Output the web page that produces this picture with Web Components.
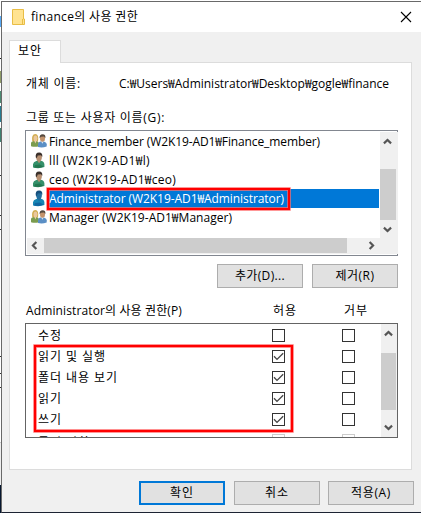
<!DOCTYPE html>
<html lang="ko">
<head>
<meta charset="utf-8">
<title>finance의 사용 권한</title>
<style>
  html, body {
    margin: 0;
    width: 421px;
    height: 513px;
    overflow: hidden;
    font: 12px/16px "Open Sans", "Noto Sans CJK KR", sans-serif;
    color: #000;
  }
</style>
</head>
<body>
<permission-dialog></permission-dialog>

<script>
// Single line label; "fit" is the width in px that the text should take.
class TextLabel extends HTMLElement {
  constructor() {
    super();
    this.attachShadow({ mode: "open" }).innerHTML = `
      <style>
        :host { display: block; white-space: nowrap; width: max-content; height: 16px; line-height: 16px; }
        span { display: block; width: max-content; height: 16px; }
      </style>
      <span><slot></slot></span>
    `;
  }

  connectedCallback() {
    const fit = Number(this.getAttribute("fit"));
    if (!fit) return;
    const span = this.shadowRoot.querySelector("span");
    const width = span.getBoundingClientRect().width;
    span.style.letterSpacing = `${(fit - width) / this.textContent.length}px`;
  }
}

class PushButton extends HTMLElement {
  constructor() {
    super();
    this.attachShadow({ mode: "open" }).innerHTML = `
      <style>
        :host {
          display: flex;
          align-items: center;
          justify-content: center;
          box-sizing: border-box;
          width: 86px;
          height: 24px;
          border: 1px solid #adadad;
          background: #e1e1e1;
        }
        :host([primary]) { border: 2px solid #0078d7; }
      </style>
      <slot></slot>
    `;
  }
}

class CheckBox extends HTMLElement {
  constructor() {
    super();
    this.attachShadow({ mode: "open" }).innerHTML = `
      <style>
        :host {
          display: block;
          box-sizing: border-box;
          width: 13px;
          height: 13px;
          border: 1px solid #333;
          background: #fff;
        }
        :host([disabled]) { border-color: #ccc; }
        svg { display: none; }
        :host([checked]) svg { display: block; }
      </style>
      <svg width="11" height="11" viewBox="0 0 11 11">
        <path d="M1 5.3 4 8.4 10.2 2.2" fill="none" stroke="#444" stroke-width="1.3"/>
      </svg>
    `;
  }
}

class ScrollBar extends HTMLElement {
  constructor() {
    super();
    this.attachShadow({ mode: "open" });
  }

  connectedCallback() {
    const horizontal = this.hasAttribute("horizontal");
    const arrows = horizontal
      ? ["M10 4.2 6.3 8 10 11.8", "M6 4.2 9.7 8 6 11.8"]
      : ["M4.2 10 8 6.3 11.8 10", "M4.2 6 8 9.7 11.8 6"];
    const arrow = (d) => `<svg width="15" height="15" viewBox="0 0 16 16"><path d="${d}" fill="none" stroke="#555" stroke-width="2.3"/></svg>`;
    this.shadowRoot.innerHTML = `
      <style>
        :host { display: flex; box-sizing: border-box; flex-direction: ${horizontal ? "row" : "column"}; background: #f0f0f0; }
        svg { flex: none; display: block; }
        .before { flex: 0 0 ${this.getAttribute("before")}px; }
        .thumb { flex: 0 0 ${this.getAttribute("thumb")}px; background: #cdcdcd; }
        .after { flex: 1; }
      </style>
      ${arrow(arrows[0])}
      <div class="before"></div>
      <div class="thumb"></div>
      <div class="after"></div>
      ${arrow(arrows[1])}
    `;
  }
}

class AccountIcon extends HTMLElement {
  constructor() {
    super();
    this.attachShadow({ mode: "open" });
  }

  connectedCallback() {
    const kind = this.getAttribute("kind");
    const user = (hair, face, body, dark) => `
      <path d="M2 15.5V12.2Q2.3 9.8 5.3 9L7 8.2 9.3 8.5Q13 9.2 13.4 12.2V15Q8 17 2 15.5Z" fill="${body}"/>
      <path d="M6 8.3 8 11.3 10 8.5 9.7 7H6Z" fill="${face}"/>
      <path d="M4 13 9 12.4 12.5 14.8 8 16 3 15.6Z" fill="${dark}"/>
      <ellipse cx="8" cy="4.9" rx="2.9" ry="3.9" fill="${face}"/>
      <path d="M4.8 5.6Q4 .5 8.1.4 12 .4 11.2 5L10 3.2 6.7 3.4 5.8 6Z" fill="${hair}"/>`;
    const group = `
      <path d="M0 13.3V10Q.5 7.9 4 7.7 7.7 7.7 8 11V13.2Q4 14.4 0 13.3Z" fill="#7b9c4e"/>
      <path d="M1.2 8.3Q.2 1 4.3.9 8.2 1 7 8.2Z" fill="#d1ad51"/>
      <path d="M3 7 4.3 10.5 6 7Z" fill="#edcfaa"/>
      <ellipse cx="4.5" cy="5.3" rx="1.9" ry="2.8" fill="#eac79e"/>
      <path d="M7 14V10.8Q7.5 8.6 11 8.3 15.3 8.6 15.7 11.3V13.5Q11 15.2 7 14Z" fill="#5b8fc5"/>
      <path d="M10 8 11.3 10.8 13 8Z" fill="#d7e7f3"/>
      <ellipse cx="11.5" cy="5.4" rx="2.5" ry="3.3" fill="#c3936c"/>
      <path d="M8.6 5.2Q8.3 1.4 11.6 1.3 15 1.5 14.3 5.2L13 3.6 10 3.8Z" fill="#54483e"/>`;
    let drawing = group;
    if (kind === "user") drawing = user("#3a302b", "#b68f71", "#34906a", "#247750");
    if (kind === "selected") drawing = user("#174f7c", "#246e9e", "#1686b5", "#1065a0");
    this.shadowRoot.innerHTML = `
      <style>:host { display: block; width: 16px; height: 17px; } svg { display: block; }</style>
      <svg width="16" height="17" viewBox="0 0 16 17">${drawing}</svg>
    `;
  }
}

class AccountRow extends HTMLElement {
  constructor() {
    super();
    this.attachShadow({ mode: "open" });
  }

  connectedCallback() {
    const kind = this.getAttribute("kind");
    this.shadowRoot.innerHTML = `
      <style>
        :host { display: grid; grid-template-columns: 16px 1fr; height: 19px; align-items: center; padding-left: 5px; }
        .name { height: 19px; box-sizing: border-box; padding: 2px 0 0 2px; }
        :host([kind="selected"]) .name { background: #0078d7; color: #fff; }
      </style>
      <account-icon kind="${kind}"></account-icon>
      <div class="name"><slot></slot></div>
    `;
  }
}

class PermissionRow extends HTMLElement {
  constructor() {
    super();
    this.attachShadow({ mode: "open" });
  }

  connectedCallback() {
    const allow = this.hasAttribute("allow") ? "checked" : "";
    const disabled = this.hasAttribute("disabled") ? "disabled" : "";
    this.shadowRoot.innerHTML = `
      <style>
        :host { display: grid; grid-template-columns: 234px 70px 1fr; height: 21px; align-items: center; padding-left: 13px; }
        :host([disabled]) ::slotted(*) { margin-top: 4px; }
      </style>
      <slot></slot>
      <check-box ${allow} ${disabled}></check-box>
      <check-box ${disabled}></check-box>
    `;
  }
}

// Red frame drawn over the lists
class MarkFrame extends HTMLElement {
  constructor() {
    super();
    this.attachShadow({ mode: "open" }).innerHTML = `
      <style>
        :host {
          position: absolute;
          box-sizing: border-box;
          border: 2px solid #f00;
          box-shadow: 0 0 0 .7px #ff6b6b, inset 0 0 0 .7px #ff6b6b;
        }
      </style>
    `;
  }
}

class PermissionDialog extends HTMLElement {
  constructor() {
    super();
    this.attachShadow({ mode: "open" });
  }

  connectedCallback() {
    this.shadowRoot.innerHTML = `
      <style>
        * { box-sizing: border-box; }
        :host {
          display: grid;
          grid-template-columns: 1px 1fr;
          width: 421px;
          height: 513px;
          position: relative;
        }
        /* strip of the window behind */
        .behind {
          background: linear-gradient(#fff 0 16px, #58aaf5 16px 27px, #fff 27px 58px, #222 58px 59px,
            #fff 59px 71px, #8f9b67 71px 83px, #fff 83px 91px, #4c8a72 91px 103px, #fff 103px 106px,
            #277c91 106px 122px, #fff 122px 128px, #3f8170 128px 142px, #fff 142px 175px, #333 175px 176px,
            #fff 176px 215px, #333 215px 216px, #fff 216px 229px, #333 229px 230px, #fff 230px 356px,
            #333 356px 357px, #fff 357px 373px, #333 373px 374px, #fff 374px 387px, #333 387px 388px,
            #fff 388px 442px, #ccc 442px 443px, #eee 443px 485px, #06172f 485px);
        }
        .window {
          margin-top: 1px;
          height: 512px;
          border: solid #696969;
          border-width: 1px 0 1px 1px;
          border-bottom-color: #1c2333;
          background: #f0f0f0;
          display: flex;
          flex-direction: column;
        }
        .title {
          flex: 0 0 30px;
          display: flex;
          align-items: center;
          background: #fff;
          padding: 0 9px 0 10px;
        }
        .title svg { display: block; }
        .title text-label { margin: 0 auto 0 6px; }
        .tab {
          width: 52px;
          height: 23px;
          margin: 8px 0 -1px 7px;
          padding: 2px 0 0 8px;
          border: 1px solid #dcdcdc;
          border-bottom: 0;
          background: #fff;
          z-index: 1;
        }
        .page {
          flex: 0 0 408px;
          width: 403px;
          margin-left: 7px;
          padding: 13px 13px 0 15px;
          border: 1px solid #dcdcdc;
          background: #fff;
        }
        .object { display: grid; grid-template-columns: 93px 1fr; padding-left: 1px; }
        .groups { margin: 18px 0 4px 1px; }
        .accounts {
          width: 373px;
          height: 126px;
          border: 1px solid #828790;
          padding: 1px;
          display: grid;
          grid-template: 106px 16px / 353px 18px;
        }
        .rows { overflow: hidden; margin-left: -1px; }
        .accounts .rows { margin-right: 1px; }
        .accounts scroll-bar { padding: 2px 2px 1px 0; }
        .accounts scroll-bar[horizontal] { grid-column: 1 / 3; height: 16px; padding: 0 19px 1px 0; }
        .edit { display: flex; justify-content: flex-end; gap: 9px; margin-top: 8px; }
        .heads { display: grid; grid-template-columns: 247px 71px 1fr; margin: 15px 0 4px 1px; }
        .permissions {
          width: 373px;
          height: 115px;
          border: 1px solid #646464;
          display: grid;
          grid-template-columns: 355px 16px;
        }
        .permissions .rows { height: 113px; margin-left: -1px; padding-top: 1px; }
        .permissions scroll-bar { height: 113px; padding: 2px 1px 2px 0; }
        .actions { display: flex; gap: 9px; margin: 11px 0 0 137px; }
        .actions push-button:last-child { margin-left: -1px; }
        .mark-user { left: 47px; top: 188px; width: 243px; height: 22px; }
        .mark-rights { left: 34px; top: 345px; width: 259px; height: 87px; }
      </style>

      <div class="behind"></div>
      <div class="window">
        <div class="title">
          <svg width="13" height="16" viewBox="0 0 13 16">
            <path d="M.5.5H11.5V10H12.5V15.5H.5Z" fill="#ffe391" stroke="#e8bd45"/>
            <path d="M10.5 10V15" stroke="#e8bd45"/>
          </svg>
          <text-label fit="107">finance의 사용 권한</text-label>
          <svg width="12" height="12" viewBox="0 0 12 12">
            <path d="M1 1 11 11M11 1 1 11" stroke="#000" stroke-width="1.1"/>
          </svg>
        </div>

        <div class="tab"><text-label fit="24">보안</text-label></div>
        <div class="page">
          <div class="object">
            <text-label fit="55">개체 이름:</text-label>
            <text-label fit="270">C:₩Users₩Administrator₩Desktop₩gogle₩finance</text-label>
          </div>
          <text-label class="groups" fit="139">그룹 또는 사용자 이름(G):</text-label>
          <div class="accounts">
            <div class="rows">
              <account-row kind="group"><text-label fit="271">Finance_member (W2K19-AD1₩Finance_member)</text-label></account-row>
              <account-row kind="user"><text-label fit="101">lll (W2K19-AD1₩l)</text-label></account-row>
              <account-row kind="user"><text-label fit="127">ceo (W2K19-AD1₩ceo)</text-label></account-row>
              <account-row kind="selected"><text-label fit="235">Administrator (W2K19-AD1₩Administrator)</text-label></account-row>
              <account-row kind="group"><text-label fit="183">Manager (W2K19-AD1₩Manager)</text-label></account-row>
            </div>
            <scroll-bar before="20" thumb="51"></scroll-bar>
            <scroll-bar horizontal before="2" thumb="303"></scroll-bar>
          </div>
          <div class="edit">
            <push-button><text-label fit="50">추가(D)...</text-label></push-button>
            <push-button><text-label fit="39">제거(R)</text-label></push-button>
          </div>
          <div class="heads">
            <text-label fit="156">Administrator의 사용 권한(P)</text-label>
            <text-label fit="24">허용</text-label>
            <text-label fit="24">거부</text-label>
          </div>
          <div class="permissions">
            <div class="rows">
              <permission-row><text-label fit="24">수정</text-label></permission-row>
              <permission-row allow><text-label fit="68">읽기 및 실행</text-label></permission-row>
              <permission-row allow><text-label fit="80">폴더 내용 보기</text-label></permission-row>
              <permission-row allow><text-label fit="24">읽기</text-label></permission-row>
              <permission-row allow><text-label fit="24">쓰기</text-label></permission-row>
              <permission-row disabled><text-label fit="52">특정 권한</text-label></permission-row>
            </div>
            <scroll-bar before="12" thumb="57"></scroll-bar>
          </div>
        </div>

        <div class="actions">
          <push-button primary><text-label fit="24">확인</text-label></push-button>
          <push-button><text-label fit="24">취소</text-label></push-button>
          <push-button><text-label fit="40">적용(A)</text-label></push-button>
        </div>
      </div>
      <mark-frame class="mark-user"></mark-frame>
      <mark-frame class="mark-rights"></mark-frame>
    `;
  }
}

customElements.define("text-label", TextLabel);
customElements.define("push-button", PushButton);
customElements.define("check-box", CheckBox);
customElements.define("scroll-bar", ScrollBar);
customElements.define("account-icon", AccountIcon);
customElements.define("account-row", AccountRow);
customElements.define("permission-row", PermissionRow);
customElements.define("mark-frame", MarkFrame);
customElements.define("permission-dialog", PermissionDialog);
</script>
</body>
</html>
